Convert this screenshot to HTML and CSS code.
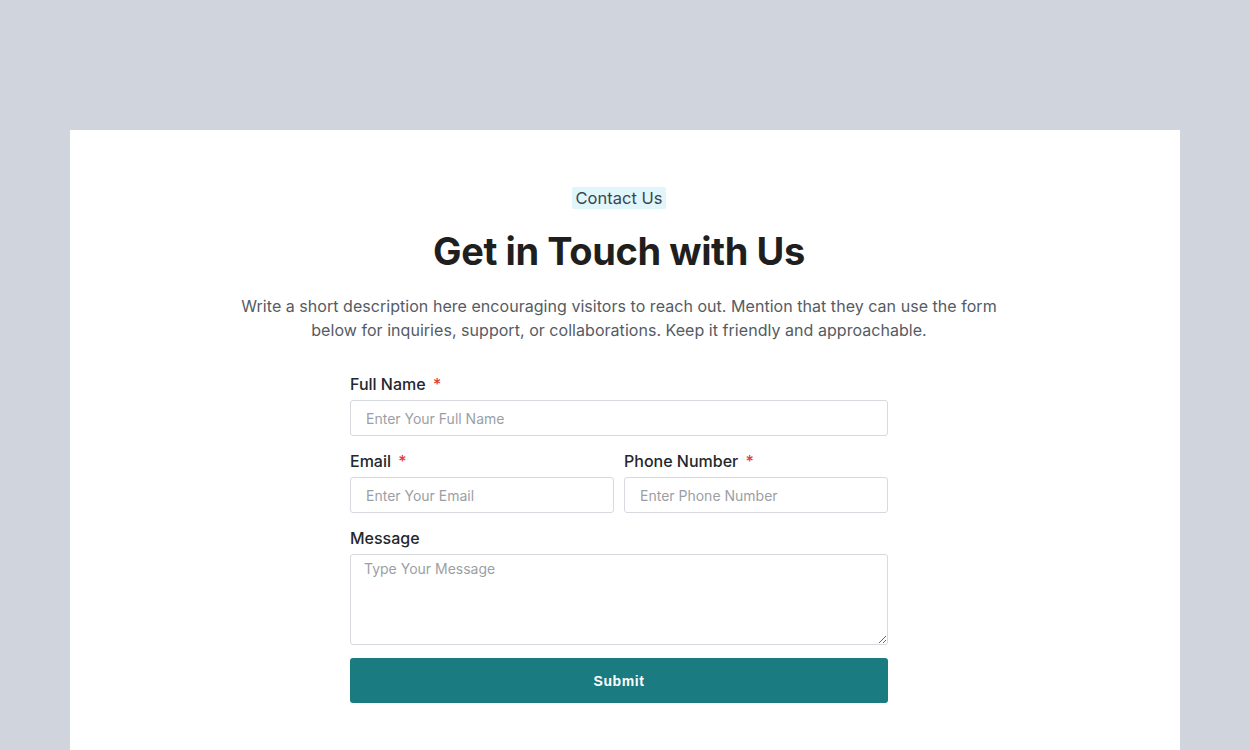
FILE: index.html
```html
<!DOCTYPE html>
<html lang="en">
<head>
<meta charset="utf-8">
<title>Contact Us</title>
<link rel="stylesheet" href="styles.css">
</head>
<body>
<div class="page">
  <section class="card">
    <div class="header">
      <span class="badge">Contact Us</span>
      <h1 class="title">Get in Touch with Us</h1>
      <p class="desc">Write a short description here encouraging visitors to reach out. Mention that they can use the form below for inquiries, support, or collaborations. Keep it friendly and approachable.</p>
    </div>
    <form class="form">
      <div class="field">
        <label class="label">Full Name <span class="req">*</span></label>
        <input class="input" type="text" placeholder="Enter Your Full Name">
      </div>
      <div class="row">
        <div class="field">
          <label class="label">Email <span class="req">*</span></label>
          <input class="input" type="email" placeholder="Enter Your Email">
        </div>
        <div class="field">
          <label class="label">Phone Number <span class="req">*</span></label>
          <input class="input" type="tel" placeholder="Enter Phone Number">
        </div>
      </div>
      <div class="field">
        <label class="label">Message</label>
        <textarea class="textarea" placeholder="Type Your Message"></textarea>
      </div>
      <button class="submit" type="button">Submit</button>
    </form>
  </section>
</div>
</body>
</html>
```

FILE: styles.css
```css
* { box-sizing: border-box; }
html, body { margin: 0; padding: 0; }
body {
  background: #d0d5dd;
  font-family: Inter, "Noto Sans", sans-serif;
}
.page {
  padding: 130px 70px 0;
}
.card {
  background: #ffffff;
  padding: 57px 76px 60px 64px;
  min-height: 640px;
}
.header {
  display: flex;
  flex-direction: column;
  align-items: center;
  text-align: center;
}
.badge {
  background: #e0f6fa;
  color: #3b4450;
  font-size: 16.5px;
  line-height: 22px;
  padding: 0 4px;
  border-radius: 2px;
}
.title {
  margin: 19px 0 0;
  font-size: 38px;
  line-height: 46px;
  font-weight: 700;
  letter-spacing: -0.4px;
  color: #1f1f1f;
}
.desc {
  margin: 20px 0 0;
  max-width: 780px;
  font-size: 16px;
  line-height: 24px;
  letter-spacing: 0.04px;
  color: #555b63;
}
.form {
  width: 538px;
  margin: 32px auto 0;
  display: flex;
  flex-direction: column;
  gap: 15px;
}
.row {
  display: grid;
  grid-template-columns: 1fr 1fr;
  gap: 10px;
}
.field {
  display: flex;
  flex-direction: column;
  gap: 6px;
}
.label {
  font-size: 16px;
  line-height: 20px;
  font-weight: 500;
  color: #24272b;
}
.req {
  color: #e03a3a;
  margin-left: 3px;
}
.input, .textarea {
  font-family: Inter, "Noto Sans", sans-serif;
  font-size: 14px;
  color: #333;
  border: 1px solid #d6d9de;
  border-radius: 3px;
  background: #fff;
  outline: none;
  width: 100%;
}
.input {
  height: 36px;
  padding: 0 15px;
}
.textarea {
  height: 91px;
  padding: 5px 13px;
  resize: vertical;
  display: block;
}
.input::placeholder, .textarea::placeholder {
  color: #9b9fa5;
}
.submit {
  margin-top: -2px;
  height: 45px;
  border: none;
  border-radius: 3px;
  background: #1a7b80;
  color: #ffffff;
  font-family: "Liberation Sans", Arial, sans-serif;
  font-weight: 700;
  font-size: 14px;
  letter-spacing: 0.6px;
}
```
